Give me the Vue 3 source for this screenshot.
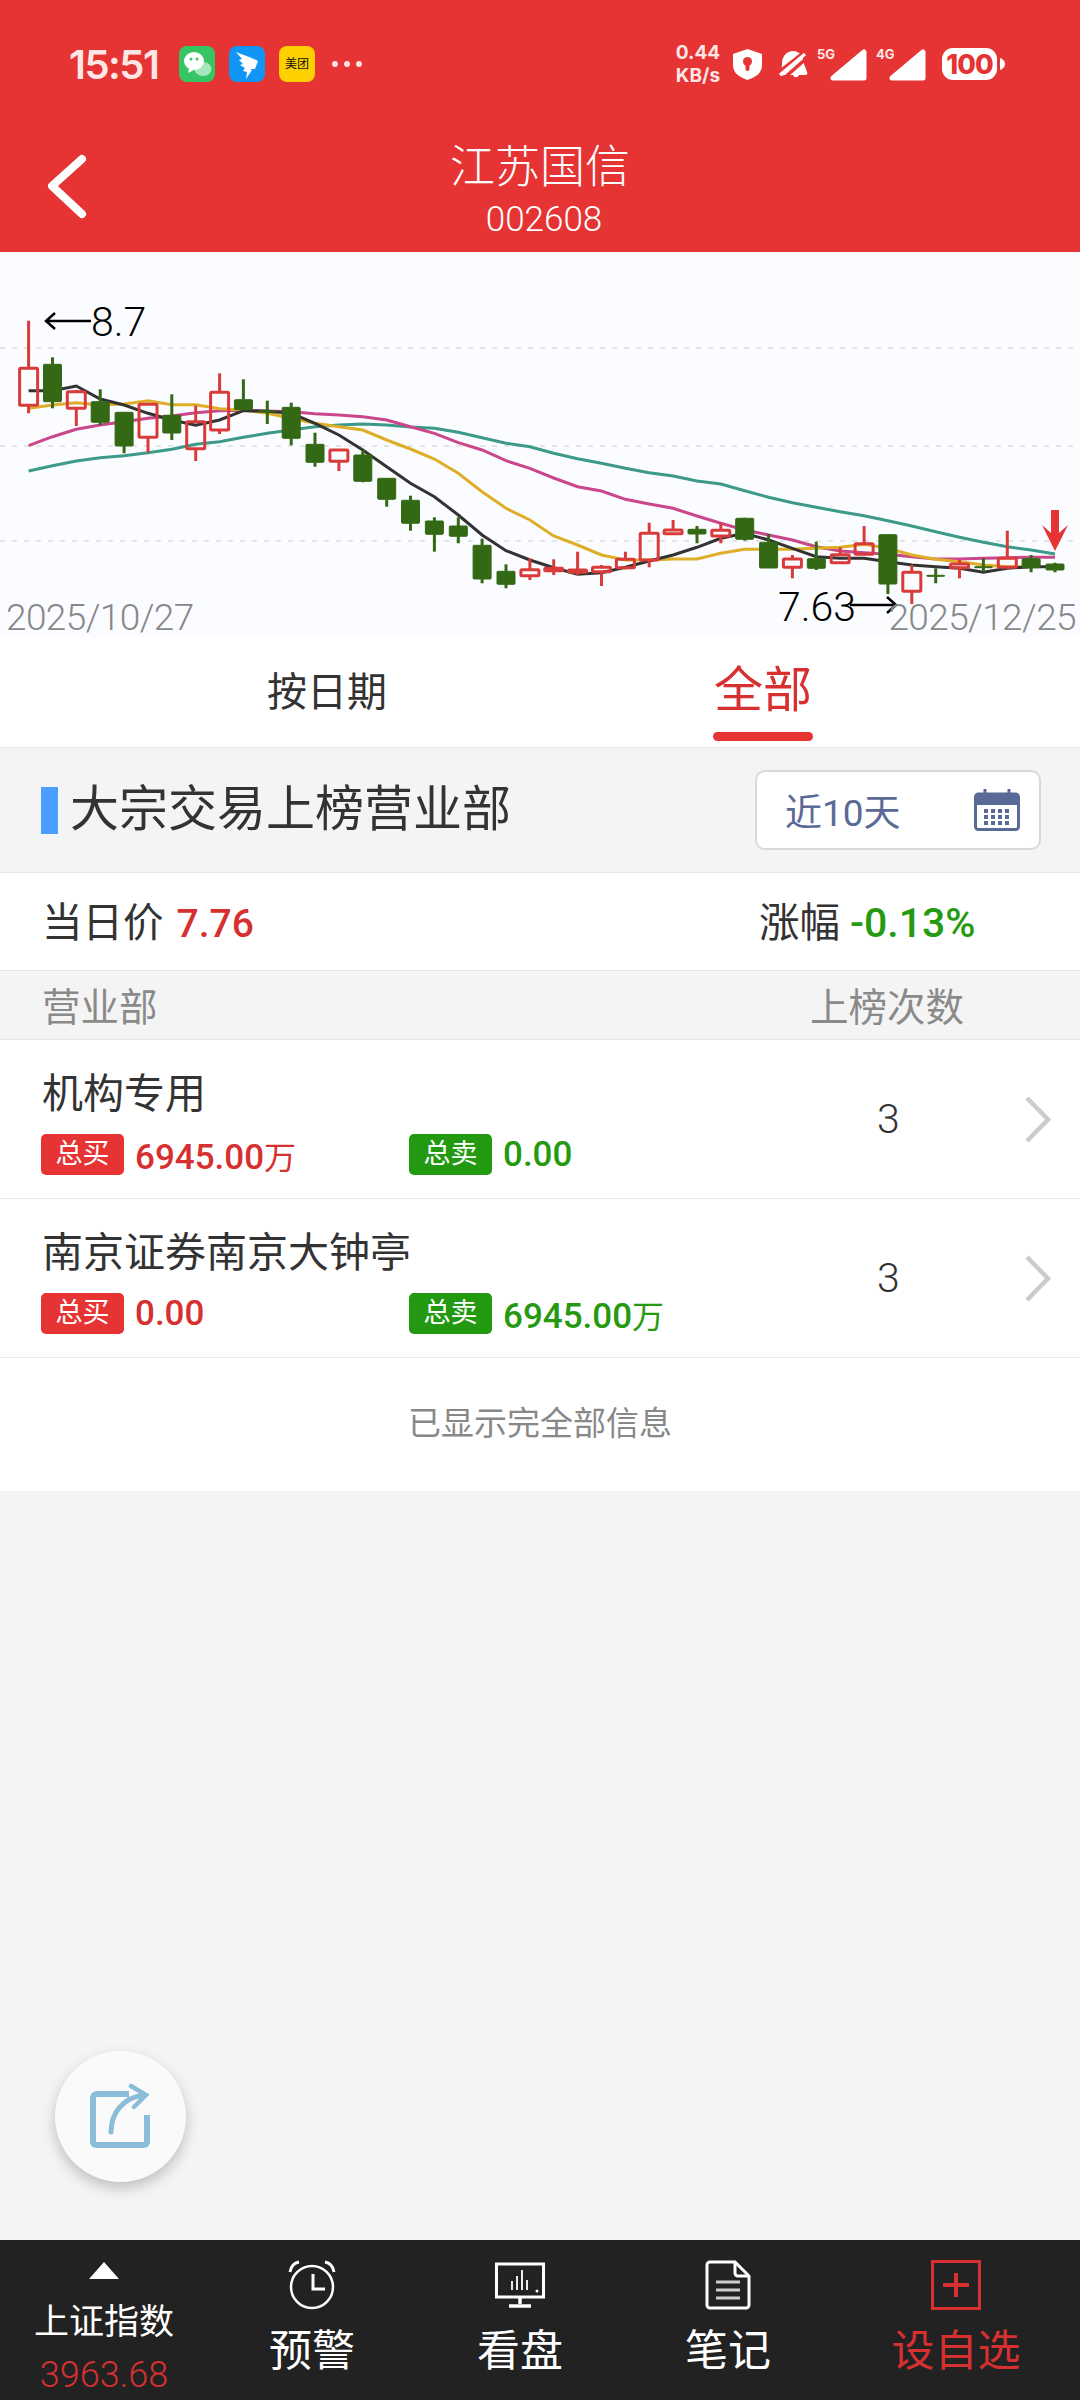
<template>
  <div class="page">
    <header class="top">
      <div class="status">
        <span class="time">15:51</span>
        <svg class="app first" viewBox="0 0 36 36">
          <rect width="36" height="36" rx="8" fill="#37c464" />
          <ellipse cx="24" cy="23" rx="8.500" ry="7" fill="#a6e8bb" />
          <ellipse cx="15" cy="15" rx="10" ry="9" fill="#fff" />
          <path d="M10 22l-1 5 6-3z" fill="#fff" />
          <circle cx="12" cy="13" r="1.500" fill="#37c464" />
          <circle cx="18" cy="13" r="1.500" fill="#37c464" />
        </svg>
        <svg class="app" viewBox="0 0 36 36">
          <rect width="36" height="36" rx="8" fill="#1296f5" />
          <path d="M7 6c7 3 15 5 22 9l-3 8h-5l2 1-6 9 1-7-4-1 2-3-5-3 3-1-4-4 3-1z" fill="#fff" />
        </svg>
        <span class="app meituan">美团</span>
        <span class="more"><i></i><i></i><i></i></span>
        <div class="status-right">
          <div class="speed">0.44<br />KB/s</div>
          <svg class="shield" viewBox="0 0 29 31">
            <path d="M14.500 0L29 5v11c0 8-6 12-14.500 15C6 28 0 24 0 16V5z" fill="#fff" />
            <circle cx="14.500" cy="12.500" r="4.500" fill="#e63333" />
            <rect x="12.500" y="13" width="4" height="9" rx="2" fill="#e63333" />
          </svg>
          <svg class="bell" viewBox="0 0 29 29">
            <path d="M3 14C3 6 8 1 14 1s11 5 11 13l3 8c1 2 0 3-2 3h-6c-1 3-5 3-6 0H5l-3 1z" fill="#fff" />
            <path d="M28 0L0 22M29 7L4 29" stroke="#e63333" stroke-width="3.400" />
            <path d="M26 4L1 25" stroke="#fff" stroke-width="3.200" />
          </svg>
          <svg class="signal" viewBox="0 0 51 34">
            <text x="0" y="12" class="net">5G</text>
            <path d="M16 31L47 5v26z" fill="#fff" stroke="#fff" stroke-width="5" stroke-linejoin="round" />
          </svg>
          <svg class="signal second" viewBox="0 0 51 34">
            <text x="0" y="12" class="net">4G</text>
            <path d="M16 31L47 5v26z" fill="#fff" stroke="#fff" stroke-width="5" stroke-linejoin="round" />
          </svg>
          <svg class="battery" viewBox="0 0 63 32">
            <rect width="55" height="32" rx="11" fill="#fff" />
            <path d="M58 10c3 1 5 3 5 6s-2 5-5 6z" fill="#fff" />
            <text x="27.500" y="26" text-anchor="middle" class="level">100</text>
          </svg>
        </div>
      </div>
      <div class="titlebar">
        <svg class="back" viewBox="0 0 45 65">
          <path d="M38 5L8 32l30 28" fill="none" stroke="#fff" stroke-width="8" stroke-linecap="round" stroke-linejoin="round" />
        </svg>
        <div class="name">
          <div class="stock">江苏国信</div>
          <div class="code">002608</div>
        </div>
      </div>
    </header>

    <section class="chart">
      <svg viewBox="0 0 1080 385" width="1080" height="385">
        <line v-for="y in gridLines" :key="y" x1="0" x2="1080" :y1="y" :y2="y" class="grid" />
        <polyline v-for="l in maLines" :key="l.color" :points="l.points" :stroke="l.color" class="ma" />
        <g v-for="c in candles" :key="c.x" :class="c.up ? 'up' : 'down'">
          <line :x1="c.x" :x2="c.x" :y1="c.high" :y2="c.top" class="wick" />
          <line :x1="c.x" :x2="c.x" :y1="c.bottom" :y2="c.low" class="wick" />
          <rect :x="c.x - 9" :y="c.top" width="18" :height="Math.max(c.bottom - c.top, 1)" rx="1" class="body" />
        </g>
        <path d="M91 69H46M55 61l-9 8 9 8" class="tip" />
        <path d="M850 353h46M887 345l9 8-9 8" class="tip" />
        <path d="M1051 258h8v23l9-8-13 26-13-26 9 8z" fill="#e63333" />
      </svg>
      <span class="price hi">8.7</span>
      <span class="price lo">7.63</span>
      <span class="date start">2025/10/27</span>
      <span class="date finish">2025/12/25</span>
    </section>

    <nav class="tabs">
      <div class="tab">按日期</div>
      <div class="tab active">全部<i></i></div>
    </nav>

    <div class="section">
      <div class="section-title"><i></i>大宗交易上榜营业部</div>
      <div class="range">
        <span>近10天</span>
        <svg viewBox="0 0 46 42" width="46" height="42">
          <rect x="1.500" y="5" width="43" height="35.500" rx="3" fill="#fff" stroke="#5a6a96" stroke-width="3" />
          <rect x="1.500" y="5" width="43" height="11" fill="#5a6a96" />
          <path d="M11 0v10M35 0v10" stroke="#5a6a96" stroke-width="3" />
          <g fill="#5a6a96">
            <template v-for="x in [10, 17, 24, 31]" :key="x">
              <rect v-for="y in [20, 26, 32]" :key="y" :x="x" :y="y" width="4" height="4" />
            </template>
          </g>
        </svg>
      </div>
    </div>

    <div class="quote">
      <div class="quote-left">当日价 <b class="red">7.76</b></div>
      <div class="quote-right">涨幅 <b class="green">-0.13%</b></div>
    </div>

    <div class="thead">
      <span>营业部</span>
      <span class="thead-count">上榜次数</span>
    </div>

    <div v-for="row in rows" :key="row.name" class="row">
      <div class="row-main">
        <div class="row-name">{{ row.name }}</div>
        <div class="row-tags">
          <div class="tag-cell">
            <span class="tag buy">总买</span>
            <span class="amount red">{{ row.buy }}<em v-if="row.buyUnit">万</em></span>
          </div>
          <div class="tag-cell">
            <span class="tag sell">总卖</span>
            <span class="amount green">{{ row.sell }}<em v-if="row.sellUnit">万</em></span>
          </div>
        </div>
      </div>
      <div class="row-count">3</div>
      <svg class="arrow" viewBox="0 0 27 47">
        <path d="M3 2l21 21.500L3 45" fill="none" stroke="#ccc" stroke-width="4.500" />
      </svg>
    </div>

    <div class="end-note">已显示完全部信息</div>

    <div class="spacer"></div>

    <button class="fab">
      <svg viewBox="0 0 64 68" width="64" height="68" fill="none" stroke="#8bbcd9" stroke-width="6">
        <path d="M40 11H8a4 4 0 0 0-4 4v44a3 3 0 0 0 3 3h48a3 3 0 0 0 3-3V32" />
        <path d="M22 49C22 30 34 14 56 12" stroke-width="5" stroke-linecap="round" />
        <path d="M42 3l15 9-12 12" stroke-width="4.500" stroke-linecap="round" />
      </svg>
    </button>

    <footer class="bar">
      <div class="index">
        <i class="tri"></i>
        <div class="index-name">上证指数</div>
        <div class="index-val">3963.68</div>
      </div>
      <div class="nav">
        <svg viewBox="0 0 48 48" width="48" height="48" fill="none" stroke="#fff" stroke-width="2.500">
          <circle cx="24" cy="26" r="21" />
          <path d="M25 13v15h12" stroke-width="3" />
          <path d="M2 11C3 5 6 2 11 1M46 11C45 5 42 2 37 1" stroke-width="3" />
        </svg>
        <span>预警</span>
      </div>
      <div class="nav">
        <svg viewBox="0 0 50 48" width="50" height="48" fill="none" stroke="#fff" stroke-width="3">
          <rect x="1.500" y="3" width="47" height="33" />
          <path d="M25 36v7M14 45h22" stroke-width="3.500" />
          <path d="M17 29v-9M22 29V15M27 29V9M32 29V19" stroke-width="1.800" />
          <circle cx="42" cy="30" r="1.500" fill="#fff" stroke="none" />
        </svg>
        <span>看盘</span>
      </div>
      <div class="nav">
        <svg viewBox="0 0 46 50" width="46" height="50" fill="none" stroke="#fff" stroke-width="3">
          <path d="M30 2H5a3 3 0 0 0-3 3v40a3 3 0 0 0 3 3h36a3 3 0 0 0 3-3V16z" />
          <path d="M30 2v11a3 3 0 0 0 3 3h11" />
          <path d="M11 22h24M11 30h24M11 38h24" stroke="#ccc" />
        </svg>
        <span>笔记</span>
      </div>
      <div class="nav fav">
        <svg viewBox="0 0 50 50" width="50" height="50" fill="none" stroke="#d63031">
          <rect x="1.500" y="1.500" width="47" height="47" stroke-width="3" />
          <path d="M25 13v24M12 25h26" stroke-width="4" />
        </svg>
        <span>设自选</span>
      </div>
    </footer>
  </div>
</template>

<script setup>
const gridLines = [96, 194, 289]

const raw = [
  [68.7, 116.3, 153.3, 161.3, 1], [105.3, 112.3, 149.7, 156.3, 0], [138, 139.7, 156.3, 174, 1],
  [137.3, 149.7, 170.3, 173, 0], [160.3, 160.3, 194, 201.3, 0], [150.7, 152.3, 185.3, 200.7, 1],
  [142.3, 163.3, 181, 188, 0], [153.7, 169.7, 196.7, 209, 1], [121.3, 140.3, 178, 182, 1],
  [127.3, 147.7, 157.7, 157.7, 0], [148.7, 158.7, 159.3, 172, 0], [150.7, 155.3, 186.3, 193.3, 0],
  [180.7, 192.3, 210.3, 214.7, 0], [197, 198, 209.3, 219, 1], [198, 203, 229.3, 230.3, 0],
  [226.3, 226.3, 247.3, 254.7, 0], [243.7, 248.3, 271.3, 278.7, 0], [265.3, 269, 282.3, 299.7, 0],
  [265.3, 274, 284.3, 291.3, 0], [286.7, 293.3, 327, 331.3, 0], [312.3, 319.3, 332.3, 336.3, 0],
  [306.3, 317.7, 323.7, 328, 1], [307.3, 316.3, 318.7, 323, 1], [299.7, 318, 320.3, 323, 1],
  [313, 315.3, 319.7, 334, 1], [299.7, 307.3, 315.7, 317.3, 1], [270.7, 281.3, 308, 315.3, 1],
  [268, 278, 281.7, 283, 1], [274, 277.3, 282, 291.3, 0], [271.3, 278.3, 284, 291.3, 1],
  [265.7, 266.3, 287.3, 288.7, 0], [282, 290.3, 316, 316, 0], [303, 307, 315.3, 326.3, 1],
  [289.7, 306.7, 316.3, 318, 0], [295.3, 302.7, 310.7, 312, 1], [274, 291.7, 302.3, 303.3, 1],
  [282, 282.7, 332, 342, 0], [313, 320.3, 339.3, 352, 1], [316.3, 323.3, 324, 331.3, 0],
  [308, 312, 315.7, 326.3, 1], [306.3, 314.7, 315.3, 319.7, 0], [278.7, 306.3, 315.3, 316.3, 1],
  [303, 306.7, 315.7, 320.3, 0], [310.7, 312, 318, 320.3, 0]
]

const xAt = (i) => +(28.6 + 23.87 * i).toFixed(1)

const candles = raw.map((c, i) => ({
  x: xAt(i),
  high: c[0],
  top: c[1],
  bottom: c[2],
  low: c[3],
  up: c[4] === 1
}))

const teal = [219, 213.7, 209, 205.7, 203.7, 200.7, 197.3, 192.3, 189.7, 185.3, 181.3, 178, 174.7, 173, 172, 173, 175, 176.3, 180.3, 185.7, 191.3, 194.7, 201.3, 206.7, 211.3, 216.3, 220.7, 224, 229, 232, 238.7, 245.3, 250.7, 255.3, 259.7, 263.7, 268.7, 274, 279.7, 285.3, 290.3, 294.7, 298, 302]
const pink = [193.7, 184.7, 177.3, 173, 169.7, 166.3, 164, 160.7, 158.7, 158.3, 159, 159.7, 161.7, 163, 164.7, 168, 174.7, 181.3, 190.7, 198, 208.7, 216.3, 226, 234.7, 239, 247.3, 252, 256.3, 264, 271.3, 278, 283, 288, 294.7, 299, 300.7, 302.3, 304.7, 307, 307, 306.3, 305.7, 305.3, 305.3]
const yellow = [156.3, 153, 150.7, 153, 152, 148.7, 152.7, 152.7, 156.7, 158, 161.3, 166.3, 171.3, 174.7, 178, 188, 197, 207, 221.3, 239.7, 256.3, 268, 284, 293, 303, 308, 308, 307, 307, 301.3, 297.3, 297.3, 297.3, 296.3, 295.3, 292.3, 296.3, 303, 307.3, 309.7, 313, 314.7, 314.7]
const black = [138.7, 138.7, 134, 147, 153, 161.3, 168, 173.3, 168, 158.7, 159.3, 161.3, 171.3, 183, 198, 214.7, 231.3, 244.7, 263, 283, 298.7, 308, 315.7, 322.3, 320.7, 315.3, 309, 303, 295.3, 286.3, 281.3, 288, 296.3, 304.7, 306.3, 306.3, 309.7, 313, 314.7, 316.3, 320.3, 316.3, 314.7, 314.7]

const toPoints = (ys) => ys.map((y, i) => `${xAt(i)},${y}`).join(' ')

const maLines = [
  { color: '#3d9a88', points: toPoints(teal) },
  { color: '#c9478a', points: toPoints(pink) },
  { color: '#dfae28', points: toPoints(yellow) },
  { color: '#333333', points: toPoints(black) }
]

const rows = [
  { name: '机构专用', buy: '6945.00', buyUnit: true, sell: '0.00', sellUnit: false },
  { name: '南京证券南京大钟亭', buy: '0.00', buyUnit: false, sell: '6945.00', sellUnit: true }
]
</script>

<style scoped>
.page {
  position: relative;
  width: 1080px;
  height: 2400px;
  display: flex;
  flex-direction: column;
  background: #f4f4f4;
  font-family: Roboto, "Noto Sans CJK SC", sans-serif;
  color: #333;
  overflow: hidden;
}

.top {
  height: 252px;
  background: #e63333;
  color: #fff;
  flex: none;
}

.status {
  display: flex;
  align-items: center;
  height: 100px;
  padding: 28px 75px 0 69px;
  box-sizing: border-box;
}

.time {
  font-family: Inter, sans-serif;
  font-size: 40px;
  font-weight: 600;
  letter-spacing: -1.500px;
  color: #ffe6e6;
  width: 91px;
  white-space: nowrap;
}

.app {
  width: 36px;
  height: 36px;
  margin-left: 14px;
  flex: none;
}

.app.first {
  margin-left: 19px;
}

.meituan {
  background: #ffd000;
  border-radius: 8px;
  color: #111;
  font-size: 12px;
  line-height: 36px;
  text-align: center;
  white-space: nowrap;
}

.more {
  display: flex;
  gap: 6px;
  margin-left: 17px;
}

.more i {
  width: 6px;
  height: 6px;
  border-radius: 50%;
  background: #ffe0e0;
}

.status-right {
  display: flex;
  align-items: center;
  margin-left: auto;
}

.speed {
  font-family: Inter, sans-serif;
  font-size: 19px;
  font-weight: 700;
  line-height: 23px;
  text-align: center;
  color: #ffe6e6;
  width: 46px;
}

.shield {
  width: 29px;
  height: 31px;
  margin-left: 12px;
}

.bell {
  width: 29px;
  height: 29px;
  margin-left: 17px;
}

.signal {
  width: 51px;
  height: 34px;
  margin-left: 9px;
  overflow: visible;
}

.signal.second {
  margin-left: 8px;
}

.net {
  font-family: Inter, sans-serif;
  font-size: 13px;
  font-weight: 700;
  fill: #ffe6e6;
}

.battery {
  width: 63px;
  height: 32px;
  margin-left: 15px;
}

.level {
  font-family: Inter, sans-serif;
  font-size: 27px;
  font-weight: 800;
  letter-spacing: -1px;
  fill: #e63333;
}

.titlebar {
  display: grid;
  grid-template-columns: 1fr auto 1fr;
  align-items: center;
}

.back {
  width: 45px;
  height: 65px;
  margin: 32px 0 0 44px;
}

.name {
  text-align: center;
  margin-top: 41px;
}

.stock {
  font-size: 45px;
  font-weight: 300;
  line-height: 56px;
  margin-top: -1px;
}

.code {
  font-size: 35px;
  font-weight: 300;
  line-height: 42px;
  margin-top: 3px;
  padding-left: 8px;
}

.chart {
  position: relative;
  height: 385px;
  background: #fbfcff;
  flex: none;
}

.chart svg {
  display: block;
}

.grid {
  stroke: #dcdcdc;
  stroke-width: 1.500;
  stroke-dasharray: 5 7;
}

.ma {
  fill: none;
  stroke-width: 3;
}

.up .wick {
  stroke: #d93b3b;
  stroke-width: 3;
}

.up .body {
  fill: none;
  stroke: #d93b3b;
  stroke-width: 3;
}

.down .wick {
  stroke: #336814;
  stroke-width: 3;
}

.down .body {
  fill: #336814;
  stroke: #336814;
  stroke-width: 1;
}

.tip {
  fill: none;
  stroke: #000;
  stroke-width: 2.500;
}

.price {
  position: absolute;
  font-size: 41px;
  font-weight: 300;
  line-height: 48px;
  color: #000;
}

.price.hi {
  left: 91px;
  top: 46px;
}

.price.lo {
  left: 778px;
  top: 331px;
}

.date {
  position: absolute;
  top: 342px;
  font-size: 37px;
  font-weight: 300;
  letter-spacing: -0.600px;
  line-height: 48px;
  color: #888;
}

.date.start {
  left: 6px;
}

.date.finish {
  right: 4px;
}

.tabs {
  display: grid;
  grid-template-columns: 1fr 1fr;
  height: 111px;
  padding: 0 99px 0 109px;
  background: #fff;
  border-bottom: 1px solid #e6e6e6;
  box-sizing: border-box;
  flex: none;
}

.tab {
  position: relative;
  text-align: center;
  font-size: 40px;
  line-height: 111px;
}

.tab.active {
  font-size: 49px;
  line-height: 108px;
  color: #d63031;
}

.tab.active i {
  position: absolute;
  left: 50%;
  bottom: 7px;
  width: 100px;
  height: 9px;
  margin-left: -50px;
  border-radius: 5px;
  background: #e63333;
}

.section {
  display: flex;
  justify-content: space-between;
  align-items: center;
  height: 124px;
  padding: 0 39px 0 41px;
  box-sizing: border-box;
  flex: none;
}

.section-title {
  display: flex;
  align-items: center;
  font-size: 49px;
  line-height: 60px;
}

.section-title i {
  width: 17px;
  height: 47px;
  margin-right: 12px;
  background: #4a9eff;
}

.range {
  display: flex;
  justify-content: space-between;
  align-items: center;
  width: 286px;
  height: 80px;
  padding: 0 19px 0 28px;
  box-sizing: border-box;
  background: #fff;
  border: 2px solid #d9d9d9;
  border-radius: 10px;
  font-size: 37px;
  color: #5a6a96;
}

.quote {
  display: flex;
  align-items: center;
  height: 98px;
  padding: 0 0 4px 42px;
  background: #fff;
  border-top: 1px solid #e8e8e8;
  box-sizing: border-box;
  font-size: 40.500px;
  flex: none;
}

.quote b {
  font-size: 39px;
  font-weight: 500;
  margin-left: 3px;
}

.quote .green {
  font-size: 41px;
  margin-left: 0;
}

.quote-right {
  margin-left: auto;
  width: 321px;
}

.red {
  color: #d63031;
}

.green {
  color: #259a10;
}

.thead {
  display: flex;
  justify-content: space-between;
  align-items: center;
  height: 70px;
  padding: 0 116px 3px 42px;
  border-top: 1px solid #e6e6e6;
  border-bottom: 1px solid #e6e6e6;
  box-sizing: border-box;
  font-size: 38.500px;
  color: #8a8a8a;
  flex: none;
}

.row {
  display: flex;
  align-items: center;
  height: 159px;
  padding-left: 41px;
  background: #fff;
  border-bottom: 1px solid #ebebeb;
  box-sizing: border-box;
  flex: none;
}

.row-main {
  width: 836px;
}

.row-name {
  font-size: 41px;
  line-height: 50px;
  padding-left: 1px;
  margin-top: 8px;
}

.row-tags {
  display: grid;
  grid-template-columns: 368px 1fr;
  margin-top: 13px;
}

.tag-cell {
  display: flex;
  align-items: center;
}

.tag {
  width: 83px;
  height: 41px;
  border-radius: 5px;
  color: #fff;
  font-size: 27px;
  line-height: 41px;
  text-align: center;
}

.tag.buy {
  background: #e63333;
}

.tag.sell {
  background: #229911;
}

.amount {
  margin-left: 11px;
  font-size: 35px;
  font-weight: 500;
  white-space: nowrap;
}

.amount em {
  font-style: normal;
  font-size: 32px;
  font-weight: 400;
}

.row-count {
  width: 20px;
  font-size: 41px;
  font-weight: 300;
  text-align: center;
}

.arrow {
  width: 27px;
  height: 47px;
  margin-left: 127px;
}

.end-note {
  height: 133px;
  background: #fff;
  text-align: center;
  font-size: 33px;
  line-height: 132px;
  color: #888;
  flex: none;
}

.spacer {
  flex: 1;
}

.fab {
  position: absolute;
  left: 55px;
  top: 2051px;
  width: 131px;
  height: 131px;
  padding: 0;
  display: flex;
  align-items: center;
  justify-content: center;
  border: none;
  border-radius: 50%;
  background: #fafafa;
  box-shadow: 0 6px 14px rgba(0, 0, 0, 0.22);
}

.bar {
  display: grid;
  grid-template-columns: repeat(4, 208px) 1fr;
  height: 160px;
  background: #222;
  color: #fff;
  flex: none;
}

.index {
  display: flex;
  flex-direction: column;
  align-items: center;
  padding-top: 22px;
}

.tri {
  width: 0;
  height: 0;
  border-left: 15px solid transparent;
  border-right: 15px solid transparent;
  border-bottom: 17px solid #fff;
}

.index-name {
  font-size: 35px;
  line-height: 42px;
  margin-top: 23px;
}

.index-val {
  font-size: 36px;
  font-weight: 300;
  line-height: 42px;
  margin-top: 10px;
  color: #d63031;
}

.nav {
  display: flex;
  flex-direction: column;
  align-items: center;
  padding-top: 20px;
}

.nav svg {
  height: 50px;
  flex: none;
}

.nav span {
  font-size: 43px;
  line-height: 52px;
  margin-top: 15px;
}

.nav.fav {
  color: #d63031;
}
</style>

<style>
html,
body {
  background: #f4f4f4;
}
</style>
